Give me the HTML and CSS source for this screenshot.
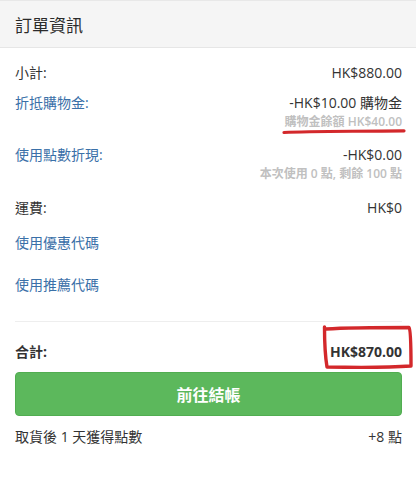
FILE: index.html
```html
<!DOCTYPE html>
<html lang="zh-Hant">
<head>
<meta charset="utf-8">
<title>訂單資訊</title>
<link rel="stylesheet" href="styles.css">
</head>
<body>
<div class="panel">
  <div class="panel-head">訂單資訊</div>
  <div class="panel-body">
    <div class="row r1"><span>小計:</span><span>HK$880.00</span></div>
    <div class="group g2">
      <div class="row"><span class="link">折抵購物金:</span><span>-HK$10.00 購物金</span></div>
      <div class="sub">購物金餘額 HK$40.00</div>
    </div>
    <div class="group g3">
      <div class="row"><span class="link">使用點數折現:</span><span>-HK$0.00</span></div>
      <div class="sub">本次使用 0 點, 剩餘 100 點</div>
    </div>
    <div class="row r4"><span>運費:</span><span>HK$0</span></div>
    <div class="row r5"><span class="link">使用優惠代碼</span></div>
    <div class="row r6"><span class="link">使用推薦代碼</span></div>
    <hr class="sep">
    <div class="row total"><span>合計:</span><span>HK$870.00</span></div>
    <button class="btn">前往結帳</button>
    <div class="row foot"><span>取貨後 1 天獲得點數</span><span>+8 點</span></div>
  </div>
</div>
<svg class="marks" width="416" height="480" viewBox="0 0 416 480">
  <path d="M284 132.5 C 310 131, 350 131.5, 404 130.8" stroke="#d3282b" stroke-width="3.2" fill="none" stroke-linecap="round"/>
  <path d="M326 329 C 350 327.5, 385 327.5, 409 327.5 C 411 330, 411 350, 411 366 C 390 367.5, 355 367.5, 327 367 C 325 355, 324.5 340, 324.5 327" stroke="#d3282b" stroke-width="3.4" fill="none" stroke-linecap="round" stroke-linejoin="round"/>
</svg>
</body>
</html>
```
FILE: styles.css
```css
html, body {
  margin: 0;
  padding: 0;
  background: #fff;
}
body {
  font-family: "Open Sans", "Noto Sans CJK TC", sans-serif;
  font-size: 14px;
  color: #333;
  position: relative;
  width: 416px;
  height: 480px;
  overflow: hidden;
}
.panel-head {
  background: #f5f5f5;
  border-top: 1px solid #e8e8e8;
  border-bottom: 1px solid #e6e6e6;
  box-sizing: border-box;
  height: 48px;
  padding: 0 15px;
  display: flex;
  align-items: center;
  font-size: 17px;
  color: #2b2b2b;
}
.panel-body {
  padding: 15px 14px 0 15px;
}
.row {
  display: flex;
  justify-content: space-between;
  align-items: center;
  height: 20px;
  line-height: 20px;
}
.link {
  color: #3a70a8;
}
.sub {
  text-align: right;
  font-size: 12px;
  line-height: 17px;
  height: 17px;
  color: #c0c0c0;
  font-weight: 600;
}
.r1 { margin-bottom: 10px; }
.g2 { margin-bottom: 15px; }
.g3 { margin-bottom: 16px; }
.r4 { margin-bottom: 15px; }
.r5 { margin-bottom: 22px; }
.r6 { margin-bottom: 26px; }
.sep {
  border: 0;
  border-top: 1px solid #eeeeee;
  margin: 0 0 20px 0;
  height: 0;
}
.total {
  font-weight: 700;
  margin-bottom: 10px;
}
.btn {
  display: block;
  width: 100%;
  height: 44px;
  border: 1px solid #51ad51;
  border-radius: 4px;
  background: #5cb85c;
  color: #fff;
  font-family: "Open Sans", "Noto Sans CJK TC", sans-serif;
  font-size: 16px;
  font-weight: 700;
  margin: 0 0 11px 0;
  padding: 0;
}
.marks {
  position: absolute;
  left: 0;
  top: 0;
  pointer-events: none;
}
```
